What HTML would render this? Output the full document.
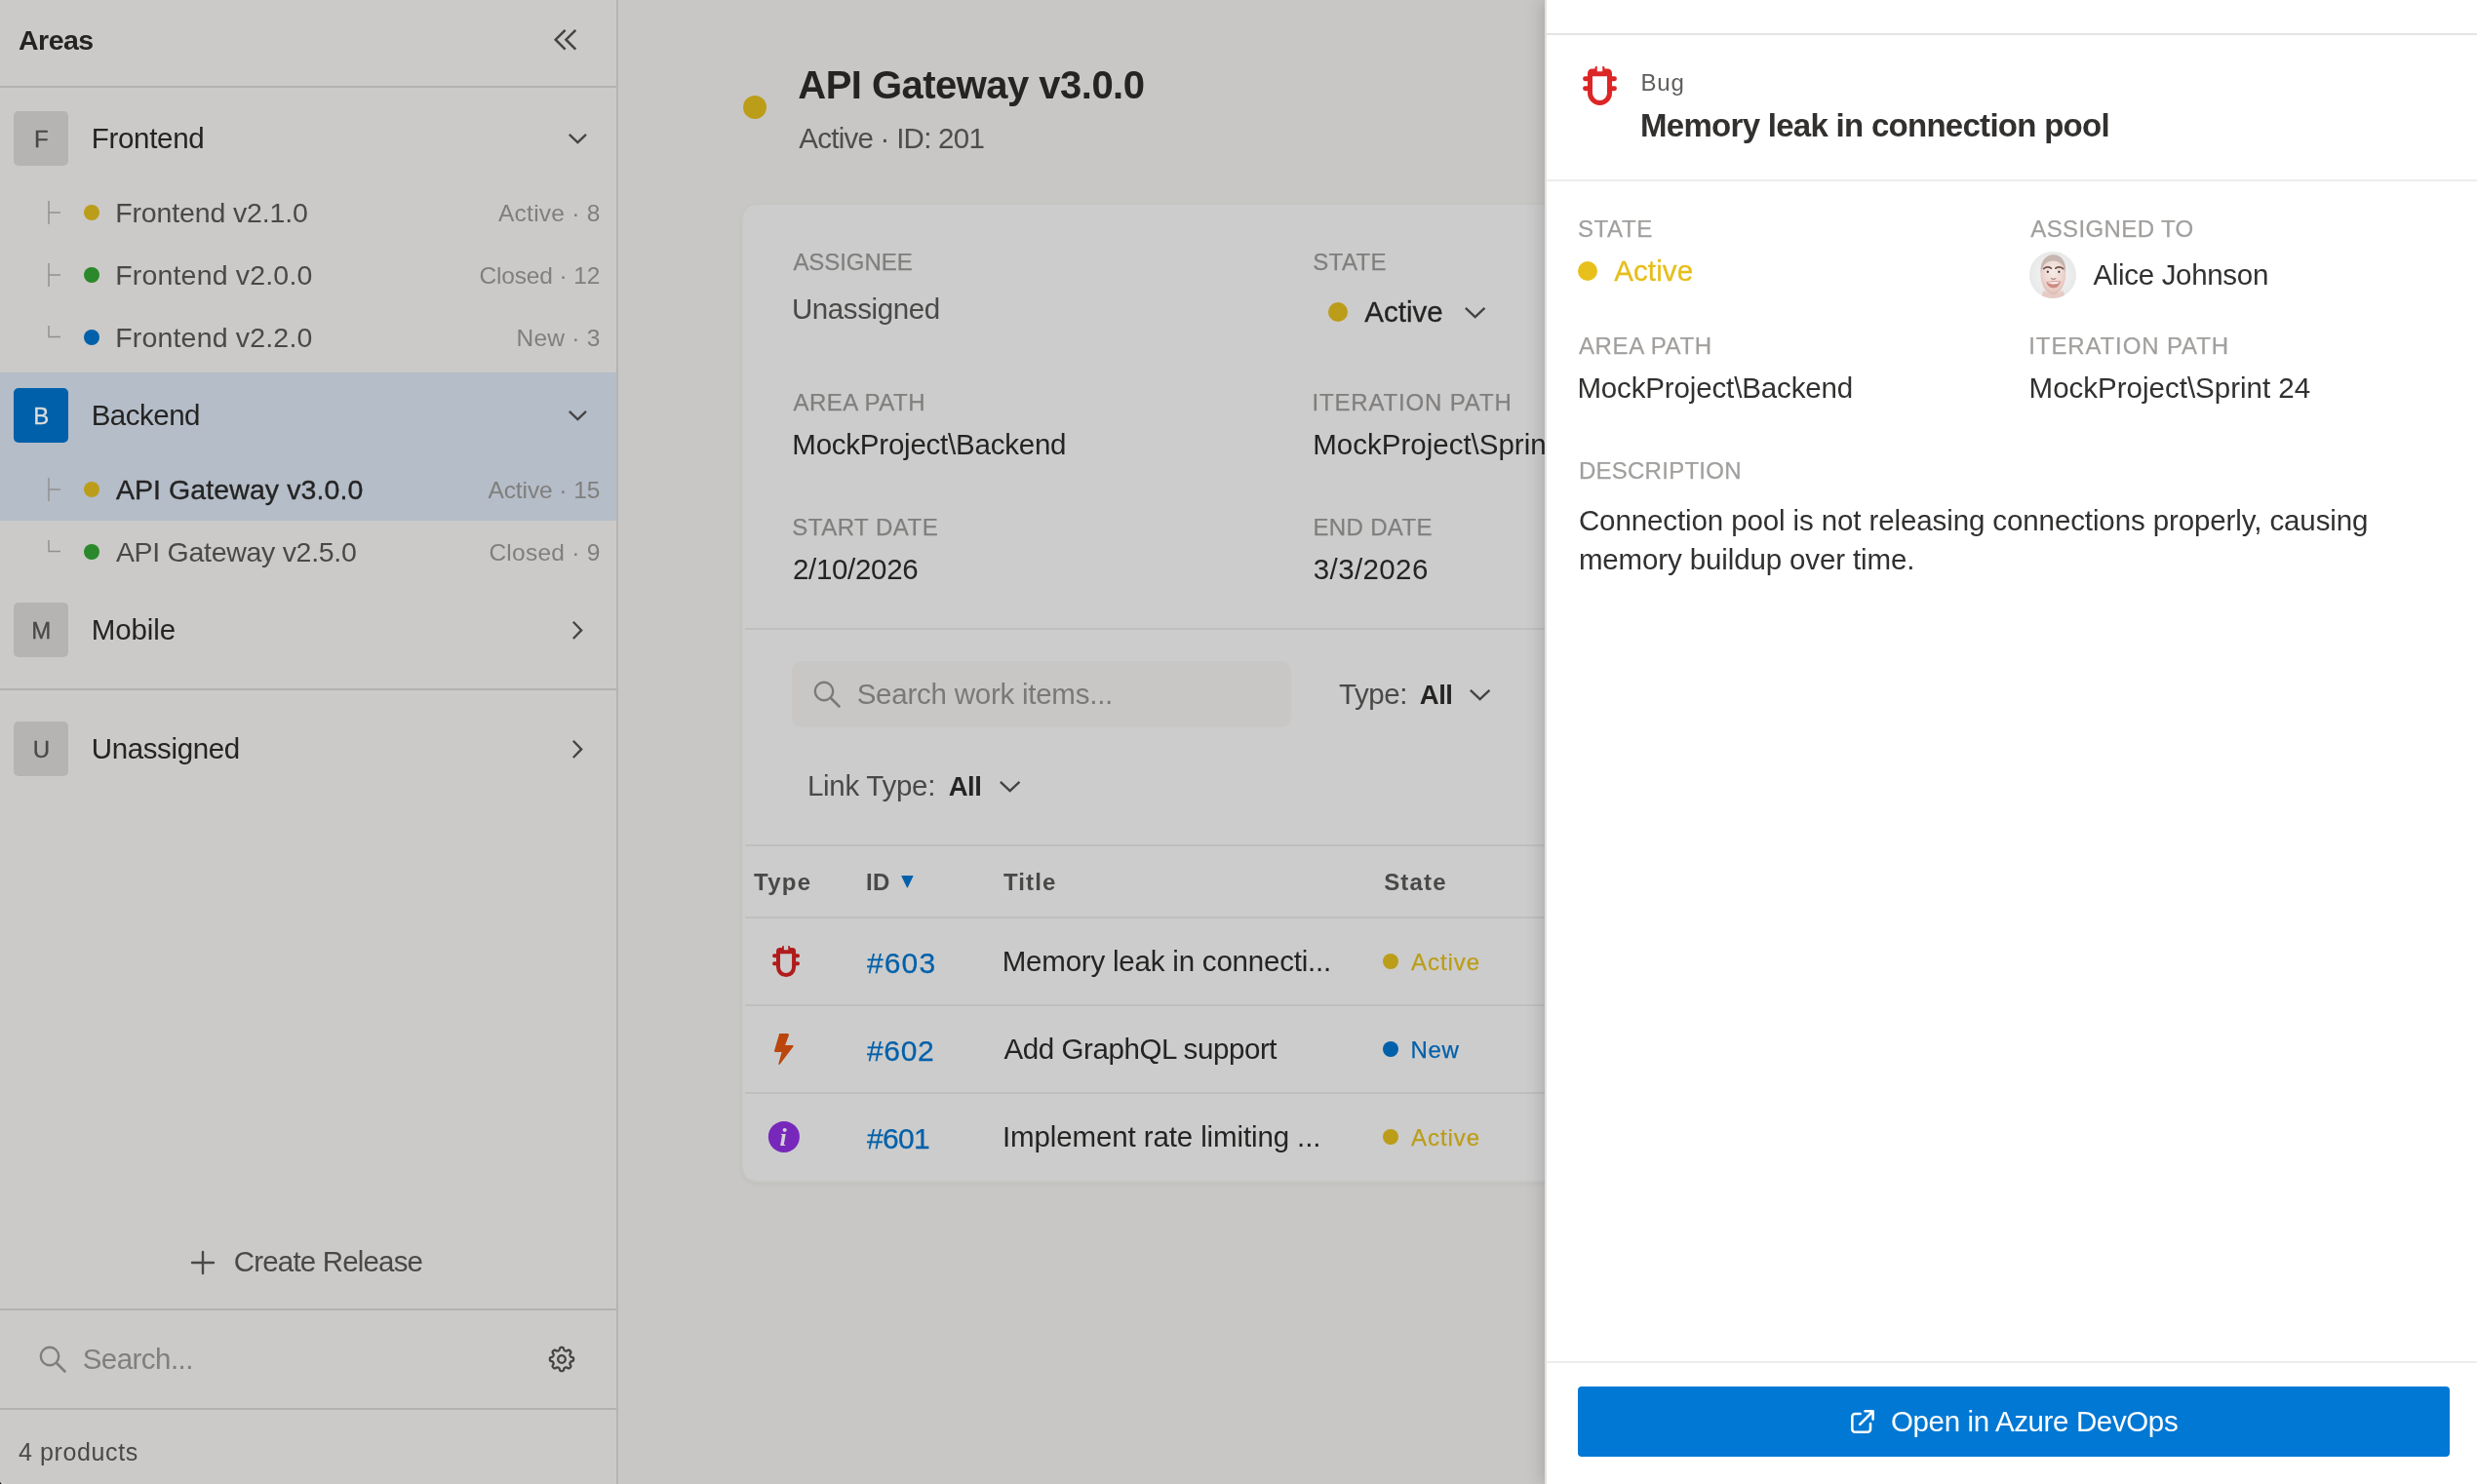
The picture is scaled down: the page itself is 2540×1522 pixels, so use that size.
<!DOCTYPE html>
<html lang="en">
<head>
<meta charset="utf-8">
<title>Areas - API Gateway v3.0.0</title>
<style>
html,body{margin:0;padding:0}
body{width:2540px;height:1522px;position:relative;overflow:hidden;background:#c8c7c6;font-family:"Liberation Sans",sans-serif;-webkit-font-smoothing:antialiased}
#app{position:relative;width:2540px;height:1522px;overflow:hidden;will-change:transform}
.t{position:absolute;white-space:nowrap}
.b{position:absolute;box-sizing:border-box}
svg{position:absolute;overflow:visible}
</style>
</head>
<body>
<div id="app">
<div class="b" style="left:634px;top:0px;width:1906px;height:1522px;background:#c8c7c6;"></div>
<aside class="sidebar" aria-label="Areas">
<div class="b" style="left:0px;top:0px;width:632px;height:1522px;background:#cbcac8;"></div>
<div class="b" style="left:632px;top:0px;width:2px;height:1522px;background:#b5b4b2;"></div>
<div class="b" style="left:0px;top:88px;width:632px;height:2px;background:#b3b2b0;"></div>
<span class="t" style="left:19.00px;top:27px;font-size:28.5px;line-height:28px;color:#252423;font-weight:700;letter-spacing:-0.518px;">Areas</span>
<svg style="left:560px;top:24px" width="40" height="34" viewBox="0 0 40 34"><path d="M19.6 6.8 L9.7 16.7 L19.6 26.6 M30.3 6.8 L20.4 16.7 L30.3 26.6" fill="none" stroke="#454443" stroke-width="2.5" stroke-linecap="butt" stroke-linejoin="miter"/></svg>
<div class="b" style="left:14px;top:114px;width:56px;height:56px;background:#b5b4b3;border-radius:5px;"></div>
<span class="t" style="left:42.3px;transform:translateX(-50%);top:131px;font-size:24px;line-height:24px;color:#4a4948;-webkit-text-stroke:0.3px;">F</span>
<span class="t" style="left:93.70px;top:127px;font-size:29.5px;line-height:30px;color:#252423;letter-spacing:-0.295px;">Frontend</span>
<svg style="left:582.6px;top:137.2px" width="18.8" height="10.8" viewBox="0 0 18.8 10.8"><path d="M0.81 0.81 L9.40 9.17 L17.99 0.81" fill="none" stroke="#454443" stroke-width="2.3" stroke-linecap="butt" stroke-linejoin="miter"/></svg>
<svg style="left:49px;top:206px" width="14" height="24" viewBox="0 0 14 24"><path d="M1 0 V24 M1 12 H13" fill="none" stroke="#929190" stroke-width="1.5"/></svg>
<div class="b" style="left:86px;top:210px;width:16px;height:16px;background:#bb9d19;border-radius:50%;"></div>
<span class="t" style="left:118.20px;top:204px;font-size:28.5px;line-height:28px;color:#4a4948;letter-spacing:-0.141px;">Frontend v2.1.0</span>
<span class="t" style="left:511.00px;top:207px;font-size:24.5px;line-height:24px;color:#807f7d;letter-spacing:0.246px;">Active · 8</span>
<svg style="left:49px;top:270px" width="14" height="24" viewBox="0 0 14 24"><path d="M1 0 V24 M1 12 H13" fill="none" stroke="#929190" stroke-width="1.5"/></svg>
<div class="b" style="left:86px;top:274px;width:16px;height:16px;background:#2b882b;border-radius:50%;"></div>
<span class="t" style="left:118.20px;top:268px;font-size:28.5px;line-height:28px;color:#4a4948;letter-spacing:0.180px;">Frontend v2.0.0</span>
<span class="t" style="left:491.40px;top:271px;font-size:24.5px;line-height:24px;color:#807f7d;letter-spacing:-0.136px;">Closed · 12</span>
<svg style="left:49px;top:334px" width="14" height="14" viewBox="0 0 14 14"><path d="M1 0 V11.5 H13" fill="none" stroke="#929190" stroke-width="1.5"/></svg>
<div class="b" style="left:86px;top:338px;width:16px;height:16px;background:#0060aa;border-radius:50%;"></div>
<span class="t" style="left:118.20px;top:332px;font-size:28.5px;line-height:28px;color:#4a4948;letter-spacing:0.180px;">Frontend v2.2.0</span>
<span class="t" style="left:529.60px;top:335px;font-size:24.5px;line-height:24px;color:#807f7d;letter-spacing:0.219px;">New · 3</span>
<div class="b" style="left:0px;top:382px;width:632px;height:152px;background:#b4bdc8;"></div>
<div class="b" style="left:14px;top:398px;width:56px;height:56px;background:#0060aa;border-radius:5px;"></div>
<span class="t" style="left:42.3px;transform:translateX(-50%);top:415px;font-size:24px;line-height:24px;color:#dcdcdc;-webkit-text-stroke:0.3px;">B</span>
<span class="t" style="left:93.70px;top:411px;font-size:29.5px;line-height:30px;color:#252423;letter-spacing:-0.499px;">Backend</span>
<svg style="left:582.6px;top:421.2px" width="18.8" height="10.8" viewBox="0 0 18.8 10.8"><path d="M0.81 0.81 L9.40 9.17 L17.99 0.81" fill="none" stroke="#454443" stroke-width="2.3" stroke-linecap="butt" stroke-linejoin="miter"/></svg>
<svg style="left:49px;top:490px" width="14" height="24" viewBox="0 0 14 24"><path d="M1 0 V24 M1 12 H13" fill="none" stroke="#929190" stroke-width="1.5"/></svg>
<div class="b" style="left:86px;top:494px;width:16px;height:16px;background:#bb9d19;border-radius:50%;"></div>
<span class="t" style="left:118.90px;top:488px;font-size:28.5px;line-height:28px;color:#252423;letter-spacing:0.086px;-webkit-text-stroke:0.35px #252423;">API Gateway v3.0.0</span>
<span class="t" style="left:500.40px;top:491px;font-size:24.5px;line-height:24px;color:#807f7d;letter-spacing:-0.082px;">Active · 15</span>
<svg style="left:49px;top:554px" width="14" height="14" viewBox="0 0 14 14"><path d="M1 0 V11.5 H13" fill="none" stroke="#929190" stroke-width="1.5"/></svg>
<div class="b" style="left:86px;top:558px;width:16px;height:16px;background:#2b882b;border-radius:50%;"></div>
<span class="t" style="left:118.90px;top:552px;font-size:28.5px;line-height:28px;color:#4a4948;letter-spacing:-0.290px;">API Gateway v2.5.0</span>
<span class="t" style="left:501.40px;top:555px;font-size:24.5px;line-height:24px;color:#807f7d;letter-spacing:0.252px;">Closed · 9</span>
<div class="b" style="left:14px;top:618px;width:56px;height:56px;background:#b5b4b3;border-radius:5px;"></div>
<span class="t" style="left:42.3px;transform:translateX(-50%);top:635px;font-size:24px;line-height:24px;color:#4a4948;-webkit-text-stroke:0.3px;">M</span>
<span class="t" style="left:93.70px;top:631px;font-size:29.5px;line-height:30px;color:#252423;letter-spacing:-0.099px;">Mobile</span>
<svg style="left:587.1px;top:636.6px" width="10.8" height="18.8" viewBox="0 0 10.8 18.8"><path d="M0.81 0.81 L9.17 9.40 L0.81 17.99" fill="none" stroke="#454443" stroke-width="2.3" stroke-linecap="butt" stroke-linejoin="miter"/></svg>
<div class="b" style="left:0px;top:706px;width:632px;height:2px;background:#b3b2b0;"></div>
<div class="b" style="left:14px;top:740px;width:56px;height:56px;background:#b5b4b3;border-radius:5px;"></div>
<span class="t" style="left:42.3px;transform:translateX(-50%);top:757px;font-size:24px;line-height:24px;color:#4a4948;-webkit-text-stroke:0.3px;">U</span>
<span class="t" style="left:93.70px;top:753px;font-size:29.5px;line-height:30px;color:#252423;letter-spacing:-0.366px;">Unassigned</span>
<svg style="left:587.1px;top:758.6px" width="10.8" height="18.8" viewBox="0 0 10.8 18.8"><path d="M0.81 0.81 L9.17 9.40 L0.81 17.99" fill="none" stroke="#454443" stroke-width="2.3" stroke-linecap="butt" stroke-linejoin="miter"/></svg>
<svg style="left:196px;top:1283px" width="24" height="24" viewBox="0 0 24 24"><path d="M12 1 V23 M1 12 H23" fill="none" stroke="#4a4948" stroke-width="2.4" stroke-linecap="round"/></svg>
<span class="t" style="left:239.80px;top:1279px;font-size:29.5px;line-height:30px;color:#4a4948;letter-spacing:-0.828px;">Create Release</span>
<div class="b" style="left:0px;top:1342px;width:632px;height:2px;background:#b3b2b0;"></div>
<svg style="left:40px;top:1380px" width="28" height="28" viewBox="0 0 28 28"><circle cx="11" cy="11" r="9.2" fill="none" stroke="#7f7e7c" stroke-width="2.4"/><path d="M18 18 L26.5 26.5" stroke="#7f7e7c" stroke-width="2.6" stroke-linecap="round"/></svg>
<span class="t" style="left:84.70px;top:1379px;font-size:29.5px;line-height:30px;color:#807f7d;letter-spacing:-0.533px;">Search...</span>
<svg style="left:560px;top:1378px" width="32" height="32" viewBox="0 0 32 32"><g fill="none" stroke="#454443" stroke-width="2.3" stroke-linejoin="round"><circle cx="16" cy="16" r="3.8"/><path d="M16.00 3.85 L16.42 3.87 L16.84 3.92 L17.26 4.05 L17.64 4.34 L17.95 4.94 L18.17 5.78 L18.38 6.46 L18.63 6.84 L18.91 7.05 L19.20 7.20 L19.50 7.33 L19.80 7.45 L20.11 7.57 L20.44 7.65 L20.82 7.65 L21.35 7.44 L22.07 7.00 L22.79 6.66 L23.34 6.61 L23.76 6.75 L24.12 6.99 L24.44 7.26 L24.74 7.56 L25.01 7.88 L25.25 8.24 L25.39 8.66 L25.34 9.21 L25.00 9.93 L24.56 10.65 L24.35 11.18 L24.35 11.56 L24.43 11.89 L24.55 12.20 L24.67 12.50 L24.80 12.80 L24.95 13.09 L25.16 13.37 L25.54 13.62 L26.22 13.83 L27.06 14.05 L27.66 14.36 L27.95 14.74 L28.08 15.16 L28.13 15.58 L28.15 16.00 L28.13 16.42 L28.08 16.84 L27.95 17.26 L27.66 17.64 L27.06 17.95 L26.22 18.17 L25.54 18.38 L25.16 18.63 L24.95 18.91 L24.80 19.20 L24.67 19.50 L24.55 19.80 L24.43 20.11 L24.35 20.44 L24.35 20.82 L24.56 21.35 L25.00 22.07 L25.34 22.79 L25.39 23.34 L25.25 23.76 L25.01 24.12 L24.74 24.44 L24.44 24.74 L24.12 25.01 L23.76 25.25 L23.34 25.39 L22.79 25.34 L22.07 25.00 L21.35 24.56 L20.82 24.35 L20.44 24.35 L20.11 24.43 L19.80 24.55 L19.50 24.67 L19.20 24.80 L18.91 24.95 L18.63 25.16 L18.38 25.54 L18.17 26.22 L17.95 27.06 L17.64 27.66 L17.26 27.95 L16.84 28.08 L16.42 28.13 L16.00 28.15 L15.58 28.13 L15.16 28.08 L14.74 27.95 L14.36 27.66 L14.05 27.06 L13.83 26.22 L13.62 25.54 L13.37 25.16 L13.09 24.95 L12.80 24.80 L12.50 24.67 L12.20 24.55 L11.89 24.43 L11.56 24.35 L11.18 24.35 L10.65 24.56 L9.93 25.00 L9.21 25.34 L8.66 25.39 L8.24 25.25 L7.88 25.01 L7.56 24.74 L7.26 24.44 L6.99 24.12 L6.75 23.76 L6.61 23.34 L6.66 22.79 L7.00 22.07 L7.44 21.35 L7.65 20.82 L7.65 20.44 L7.57 20.11 L7.45 19.80 L7.33 19.50 L7.20 19.20 L7.05 18.91 L6.84 18.63 L6.46 18.38 L5.78 18.17 L4.94 17.95 L4.34 17.64 L4.05 17.26 L3.92 16.84 L3.87 16.42 L3.85 16.00 L3.87 15.58 L3.92 15.16 L4.05 14.74 L4.34 14.36 L4.94 14.05 L5.78 13.83 L6.46 13.62 L6.84 13.37 L7.05 13.09 L7.20 12.80 L7.33 12.50 L7.45 12.20 L7.57 11.89 L7.65 11.56 L7.65 11.18 L7.44 10.65 L7.00 9.93 L6.66 9.21 L6.61 8.66 L6.75 8.24 L6.99 7.88 L7.26 7.56 L7.56 7.26 L7.88 6.99 L8.24 6.75 L8.66 6.61 L9.21 6.66 L9.93 7.00 L10.65 7.44 L11.18 7.65 L11.56 7.65 L11.89 7.57 L12.20 7.45 L12.50 7.33 L12.80 7.20 L13.09 7.05 L13.37 6.84 L13.62 6.46 L13.83 5.78 L14.05 4.94 L14.36 4.34 L14.74 4.05 L15.16 3.92 L15.58 3.87 Z"/></g></svg>
<div class="b" style="left:0px;top:1444px;width:632px;height:2px;background:#b3b2b0;"></div>
<span class="t" style="left:18.90px;top:1477px;font-size:25px;line-height:25px;color:#4a4948;letter-spacing:0.629px;">4 products</span>
<svg style="left:0px;top:1516px" width="6" height="6" viewBox="0 0 6 6"><path d="M0 0 A6 6 0 0 0 6 6 H0 Z" fill="#d9d8d6"/><path d="M0 2.4 A3.6 3.6 0 0 0 3.6 6 H0 Z" fill="#0a0a0a"/></svg>
</aside>
<main class="release-detail">
<div class="b" style="left:762px;top:98px;width:24px;height:24px;background:#bb9d19;border-radius:50%;"></div>
<span class="t" style="left:818.30px;top:67px;font-size:40px;line-height:40px;color:#252423;font-weight:700;letter-spacing:-0.530px;">API Gateway v3.0.0</span>
<span class="t" style="left:819.30px;top:127px;font-size:29.5px;line-height:30px;color:#4e4d4c;letter-spacing:-0.744px;">Active · ID: 201</span>
<div class="b" style="left:760px;top:208px;width:900px;height:1005px;background:#cccccc;border-radius:16px;border:2px solid #c5c5c4;box-shadow:0 2px 4px rgba(0,0,0,0.04);"></div>
<span class="t" style="left:813.40px;top:257px;font-size:24px;line-height:24px;color:#807f7d;letter-spacing:-0.057px;-webkit-text-stroke:0.25px;">ASSIGNEE</span>
<span class="t" style="left:811.90px;top:302px;font-size:29.5px;line-height:30px;color:#4a4948;letter-spacing:-0.399px;">Unassigned</span>
<span class="t" style="left:1346.20px;top:257px;font-size:24px;line-height:24px;color:#807f7d;letter-spacing:0.407px;-webkit-text-stroke:0.25px;">STATE</span>
<div class="b" style="left:1362px;top:310px;width:20px;height:20px;background:#bb9d19;border-radius:50%;"></div>
<span class="t" style="left:1399.30px;top:305px;font-size:29.5px;line-height:30px;color:#252423;letter-spacing:-0.005px;-webkit-text-stroke:0.3px;">Active</span>
<svg style="left:1501.55px;top:314.5px" width="21.3" height="11.8" viewBox="0 0 21.3 11.8"><path d="M0.85 0.85 L10.65 10.10 L20.45 0.85" fill="none" stroke="#454443" stroke-width="2.4" stroke-linecap="butt" stroke-linejoin="miter"/></svg>
<span class="t" style="left:813.40px;top:401px;font-size:24px;line-height:24px;color:#807f7d;letter-spacing:0.495px;-webkit-text-stroke:0.25px;">AREA PATH</span>
<span class="t" style="left:812.30px;top:441px;font-size:29.5px;line-height:30px;color:#252423;letter-spacing:-0.227px;">MockProject\Backend</span>
<span class="t" style="left:1345.50px;top:401px;font-size:24px;line-height:24px;color:#807f7d;letter-spacing:0.838px;-webkit-text-stroke:0.25px;">ITERATION PATH</span>
<span class="t" style="left:1346.30px;top:441px;font-size:29.5px;line-height:30px;color:#252423;">MockProject\Sprint 24</span>
<span class="t" style="left:812.30px;top:529px;font-size:24px;line-height:24px;color:#807f7d;letter-spacing:0.496px;-webkit-text-stroke:0.25px;">START DATE</span>
<span class="t" style="left:812.90px;top:569px;font-size:29.5px;line-height:30px;color:#252423;letter-spacing:-0.304px;">2/10/2026</span>
<span class="t" style="left:1346.50px;top:529px;font-size:24px;line-height:24px;color:#807f7d;letter-spacing:0.334px;-webkit-text-stroke:0.25px;">END DATE</span>
<span class="t" style="left:1346.80px;top:569px;font-size:29.5px;line-height:30px;color:#252423;letter-spacing:0.382px;">3/3/2026</span>
<div class="b" style="left:764px;top:644px;width:900px;height:2px;background:#bfbfbe;"></div>
<div class="b" style="left:812px;top:678px;width:512px;height:68px;background:#c8c7c5;border-radius:10px;"></div>
<svg style="left:834px;top:698px" width="28" height="28" viewBox="0 0 28 28"><circle cx="11" cy="11" r="9.2" fill="none" stroke="#7b7a79" stroke-width="2.4"/><path d="M18 18 L26.5 26.5" stroke="#7b7a79" stroke-width="2.6" stroke-linecap="round"/></svg>
<span class="t" style="left:878.70px;top:697px;font-size:29.5px;line-height:30px;color:#7a7978;letter-spacing:-0.243px;">Search work items...</span>
<span class="t" style="left:1372.90px;top:697px;font-size:29.5px;line-height:30px;color:#4a4948;letter-spacing:-0.389px;">Type:</span>
<span class="t" style="left:1455.80px;top:699px;font-size:27.5px;line-height:28px;color:#252423;font-weight:700;letter-spacing:-0.500px;">All</span>
<svg style="left:1507.15px;top:706.5px" width="21.3" height="11.8" viewBox="0 0 21.3 11.8"><path d="M0.85 0.85 L10.65 10.10 L20.45 0.85" fill="none" stroke="#454443" stroke-width="2.4" stroke-linecap="butt" stroke-linejoin="miter"/></svg>
<span class="t" style="left:827.90px;top:791px;font-size:29.5px;line-height:30px;color:#4a4948;letter-spacing:-0.263px;">Link Type:</span>
<span class="t" style="left:972.70px;top:793px;font-size:27.5px;line-height:28px;color:#252423;font-weight:700;letter-spacing:-0.500px;">All</span>
<svg style="left:1024.55px;top:800.6px" width="21.3" height="11.8" viewBox="0 0 21.3 11.8"><path d="M0.85 0.85 L10.65 10.10 L20.45 0.85" fill="none" stroke="#454443" stroke-width="2.4" stroke-linecap="butt" stroke-linejoin="miter"/></svg>
<div class="b" style="left:764px;top:866px;width:900px;height:2px;background:#bfbfbe;"></div>
<span class="t" style="left:773.00px;top:893px;font-size:24px;line-height:24px;color:#4a4948;font-weight:700;letter-spacing:1.271px;">Type</span>
<span class="t" style="left:888.00px;top:893px;font-size:24px;line-height:24px;color:#4a4948;font-weight:700;letter-spacing:0.432px;">ID</span>
<svg style="left:923.6px;top:897.6px" width="13" height="13" viewBox="0 0 13 13"><path d="M0.3 0.4 Q0 0 0.6 0 H12.2 Q12.8 0 12.5 0.5 L6.8 12.3 Q6.4 13 6 12.3 Z" fill="#0060aa"/></svg>
<span class="t" style="left:1029.00px;top:893px;font-size:24px;line-height:24px;color:#4a4948;font-weight:700;letter-spacing:1.086px;">Title</span>
<span class="t" style="left:1419.20px;top:893px;font-size:24px;line-height:24px;color:#4a4948;font-weight:700;letter-spacing:1.165px;">State</span>
<div class="b" style="left:764px;top:940px;width:900px;height:2px;background:#bfbfbe;"></div>
<div class="b" style="left:764px;top:1030px;width:900px;height:2px;background:#bfbfbe;"></div>
<div class="b" style="left:764px;top:1120px;width:900px;height:2px;background:#bfbfbe;"></div>
<svg style="left:792px;top:969.8px" width="28.1" height="32.1143" viewBox="0 0 28 32"><path fill-rule="evenodd" fill="#b01c1c" d="M4 22 V5.6 a3.6 3.6 0 0 1 3.6 -3.6 H10 V1.2 Q10 0 11 0 H11.8 V4.2 H16.2 V0 H17 Q18 0 18 1.2 V2 H20.4 a3.6 3.6 0 0 1 3.6 3.6 V22 a10 10 0 0 1 -20 0 Z M8 8.2 H20 V22 a6 6 0 0 1 -12 0 Z"/><path d="M2 10.2 H5 M2 18.2 H5 M23 10.2 H26 M23 18.2 H26" stroke="#b01c1c" stroke-width="3.9" stroke-linecap="round" fill="none"/></svg>
<span class="t" style="left:889.00px;top:973px;font-size:30px;line-height:30px;color:#0060aa;letter-spacing:1.115px;-webkit-text-stroke:0.25px;">#603</span>
<span class="t" style="left:1027.70px;top:971px;font-size:29.5px;line-height:30px;color:#252423;letter-spacing:-0.203px;">Memory leak in connecti...</span>
<div class="b" style="left:1418px;top:978px;width:16px;height:16px;background:#bb9d19;border-radius:50%;"></div>
<span class="t" style="left:1447.00px;top:975px;font-size:24px;line-height:24px;color:#bb9d19;letter-spacing:0.958px;-webkit-text-stroke:0.25px;">Active</span>
<svg style="left:790px;top:1056px" width="28" height="40" viewBox="0 0 28 40"><path d="M9.2 4.1 H18.2 L19 5.4 L15.1 16.1 H23.3 L23.6 17.2 L9.3 35.9 L8.2 35.4 L11.6 23 H4.5 L4 21.8 Z" fill="#ba460d"/></svg>
<span class="t" style="left:889.00px;top:1063px;font-size:30px;line-height:30px;color:#0060aa;letter-spacing:0.682px;-webkit-text-stroke:0.25px;">#602</span>
<span class="t" style="left:1029.50px;top:1061px;font-size:29.5px;line-height:30px;color:#252423;letter-spacing:-0.418px;">Add GraphQL support</span>
<div class="b" style="left:1418px;top:1068px;width:16px;height:16px;background:#0060aa;border-radius:50%;"></div>
<span class="t" style="left:1446.60px;top:1065px;font-size:24px;line-height:24px;color:#0060aa;letter-spacing:0.560px;-webkit-text-stroke:0.25px;">New</span>
<svg style="left:787px;top:1149px" width="34" height="34" viewBox="0 0 34 34"><circle cx="16.9" cy="16.9" r="16" fill="#7728bb"/><text x="16.1" y="25.9" text-anchor="middle" font-family="Liberation Serif,serif" font-style="italic" font-weight="700" font-size="26" fill="#d2d2d2">i</text></svg>
<span class="t" style="left:889.00px;top:1153px;font-size:30px;line-height:30px;color:#0060aa;letter-spacing:-0.685px;-webkit-text-stroke:0.25px;">#601</span>
<span class="t" style="left:1028.00px;top:1151px;font-size:29.5px;line-height:30px;color:#252423;letter-spacing:-0.120px;">Implement rate limiting ...</span>
<div class="b" style="left:1418px;top:1158px;width:16px;height:16px;background:#bb9d19;border-radius:50%;"></div>
<span class="t" style="left:1447.00px;top:1155px;font-size:24px;line-height:24px;color:#bb9d19;letter-spacing:0.958px;-webkit-text-stroke:0.25px;">Active</span>
</main>
<section class="drawer" role="dialog" aria-label="Work item details">
<div class="b" style="left:1584px;top:0px;width:956px;height:1522px;background:#ffffff;border-left:2px solid #e3e2e1;box-shadow:-4px 0 16px rgba(0,0,0,0.15);"></div>
<div class="b" style="left:1586px;top:34px;width:954px;height:2px;background:#e4e4e4;"></div>
<svg style="left:1623px;top:67.8px" width="35" height="40" viewBox="0 0 28 32"><path fill-rule="evenodd" fill="#dc2626" d="M4 22 V5.6 a3.6 3.6 0 0 1 3.6 -3.6 H10 V1.2 Q10 0 11 0 H11.8 V4.2 H16.2 V0 H17 Q18 0 18 1.2 V2 H20.4 a3.6 3.6 0 0 1 3.6 3.6 V22 a10 10 0 0 1 -20 0 Z M8 8.2 H20 V22 a6 6 0 0 1 -12 0 Z"/><path d="M2 10.2 H5 M2 18.2 H5 M23 10.2 H26 M23 18.2 H26" stroke="#dc2626" stroke-width="3.9" stroke-linecap="round" fill="none"/></svg>
<span class="t" style="left:1682.60px;top:73px;font-size:24px;line-height:24px;color:#605e5c;letter-spacing:0.772px;">Bug</span>
<span class="t" style="left:1682.10px;top:112px;font-size:33px;line-height:33px;color:#323130;font-weight:700;letter-spacing:-0.719px;">Memory leak in connection pool</span>
<div class="b" style="left:1586px;top:184px;width:954px;height:2px;background:#ededed;"></div>
<span class="t" style="left:1618.00px;top:223px;font-size:24px;line-height:24px;color:#a19f9d;letter-spacing:0.607px;-webkit-text-stroke:0.25px;">STATE</span>
<div class="b" style="left:1618px;top:268.2px;width:20px;height:20px;background:#e8c01c;border-radius:50%;"></div>
<span class="t" style="left:1655.20px;top:263px;font-size:29.5px;line-height:30px;color:#e6be1c;letter-spacing:0.115px;-webkit-text-stroke:0.3px;">Active</span>
<span class="t" style="left:2082.30px;top:223px;font-size:24px;line-height:24px;color:#a19f9d;letter-spacing:0.377px;-webkit-text-stroke:0.25px;">ASSIGNED TO</span>
<svg style="left:2081px;top:258px" width="48" height="48" viewBox="0 0 48 48"><defs><clipPath id="avc"><circle cx="24" cy="24" r="24"/></clipPath><radialGradient id="avg" cx="0.5" cy="0.5" r="0.62"><stop offset="0" stop-color="#f7f6f5"/><stop offset="1" stop-color="#e3e6e5"/></radialGradient><radialGradient id="avf" cx="0.5" cy="0.42" r="0.62"><stop offset="0" stop-color="#f6ebe8"/><stop offset="0.7" stop-color="#ecd3cc"/><stop offset="1" stop-color="#d9b3aa"/></radialGradient></defs><g clip-path="url(#avc)"><rect width="48" height="48" fill="url(#avg)"/><path d="M14.5 40 Q24 47 34.5 40 L38 50 H11 Z" fill="#e6cbc4"/><path d="M11.6 21 C11 9 18 3.6 24.6 3.6 C31.5 3.6 38 9 37 21 C37.6 26 36.6 31 34 36.5 C31.5 41.5 27.5 44 24.4 44 C21 44 17 41.5 14.6 36.5 C12.2 31 11.2 26 11.6 21 Z" fill="url(#avf)"/><path d="M11.8 22 C10.6 9 18 3.2 24.6 3.2 C31.6 3.2 38.4 9 36.9 22 C35.5 13.5 31 9.6 24.5 9.6 C18 9.6 13.4 13.5 11.8 22 Z" fill="#bdb0aa" opacity="0.85"/><path d="M14.6 17.6 Q18.5 14.6 22.4 17.2 M26.8 17.2 Q30.8 14.6 34.6 17.6" stroke="#6d5149" stroke-width="1.7" fill="none" stroke-linecap="round"/><ellipse cx="18.6" cy="20.6" rx="2.3" ry="1.5" fill="#fbf8f7"/><ellipse cx="30.6" cy="20.6" rx="2.3" ry="1.5" fill="#fbf8f7"/><circle cx="18.8" cy="20.7" r="1.25" fill="#4e3c37"/><circle cx="30.4" cy="20.7" r="1.25" fill="#4e3c37"/><path d="M22.3 27.6 Q24.6 29.4 27 27.6" stroke="#b48d84" stroke-width="1.3" fill="none" stroke-linecap="round"/><path d="M17.2 31.2 Q24.5 29.6 32.2 30.6 Q30.5 37.4 24.6 37.4 Q19.2 37.4 17.2 31.2 Z" fill="#cf8a84"/><path d="M18.6 31.6 Q24.6 30.6 30.8 31.2 Q29.8 33.4 24.6 33.4 Q20 33.4 18.6 31.6 Z" fill="#f4ecea"/></g></svg>
<span class="t" style="left:2146.40px;top:267px;font-size:29.5px;line-height:30px;color:#323130;letter-spacing:-0.314px;">Alice Johnson</span>
<span class="t" style="left:1619.00px;top:343px;font-size:24px;line-height:24px;color:#a19f9d;letter-spacing:0.608px;-webkit-text-stroke:0.25px;">AREA PATH</span>
<span class="t" style="left:1617.40px;top:383px;font-size:29.5px;line-height:30px;color:#323130;letter-spacing:-0.138px;">MockProject\Backend</span>
<span class="t" style="left:2080.30px;top:343px;font-size:24px;line-height:24px;color:#a19f9d;letter-spacing:0.877px;-webkit-text-stroke:0.25px;">ITERATION PATH</span>
<span class="t" style="left:2080.60px;top:383px;font-size:29.5px;line-height:30px;color:#323130;">MockProject\Sprint 24</span>
<span class="t" style="left:1618.90px;top:471px;font-size:24px;line-height:24px;color:#a19f9d;letter-spacing:0.262px;-webkit-text-stroke:0.25px;">DESCRIPTION</span>
<span class="t" style="left:1618.90px;top:519px;font-size:29.5px;line-height:30px;color:#323130;letter-spacing:-0.108px;">Connection pool is not releasing connections properly, causing</span>
<span class="t" style="left:1618.90px;top:559px;font-size:29.5px;line-height:30px;color:#323130;letter-spacing:-0.128px;">memory buildup over time.</span>
<div class="b" style="left:1586px;top:1396px;width:954px;height:2px;background:#ededed;"></div>
<div class="b" style="left:1618px;top:1422px;width:894px;height:72px;background:#0078d4;border-radius:4px;"></div>
<svg style="left:1890px;top:1440px" width="40" height="36" viewBox="0 0 40 36"><g fill="none" stroke="#ffffff" stroke-width="2.6" stroke-linecap="round" stroke-linejoin="round"><path d="M17.6 10 H12.3 a3 3 0 0 0 -3 3 V25.7 a3 3 0 0 0 3 3 H25 a3 3 0 0 0 3 -3 V20"/><path d="M22.5 7.3 H30.6 V15.6 M30.6 7.3 L17.2 20.8"/></g></svg>
<span class="t" style="left:1939.00px;top:1443px;font-size:29.5px;line-height:30px;color:#ffffff;letter-spacing:-0.373px;">Open in Azure DevOps</span>
</section>
</div>
</body>
</html>
